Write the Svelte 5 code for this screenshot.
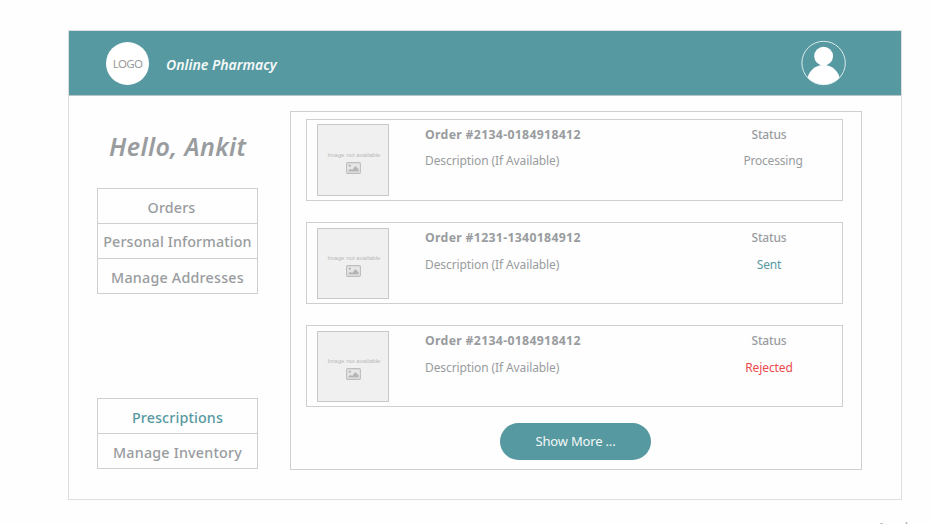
<script>
  const account = [{ label: 'Orders' }, { label: 'Personal Information' }, { label: 'Manage Addresses' }];
  const orders = [
    { id: '2134-0184918412', status: 'Processing', tone: 'pending' },
    { id: '1231-1340184912', status: 'Sent', tone: 'sent' },
    { id: '2134-0184918412', status: 'Rejected', tone: 'rejected' }
  ];
</script>

<div class="page">
  <div class="frame">
    <header>
      <div class="logo"><span>LOGO</span></div>
      <h1><span>Online Pharmacy</span></h1>
      <svg class="avatar" viewBox="0 0 46 46" width="46" height="46">
        <defs><clipPath id="ring"><circle cx="22.6" cy="23" r="22" /></clipPath></defs>
        <circle cx="22.6" cy="16.2" r="9.4" fill="#fff" />
        <ellipse cx="22.6" cy="40.8" rx="16.3" ry="15.8" fill="#fff" clip-path="url(#ring)" />
        <circle cx="22.6" cy="23" r="21.7" fill="none" stroke="#dcebec" stroke-width="1" />
      </svg>
    </header>
    <main>
      <aside>
        <h2><span>Hello, Ankit</span></h2>
        <nav class="account">
          {#each account as item, i}
            <a class="n{i}" href="#top"><span>{item.label}</span></a>
          {/each}
        </nav>
        <nav class="manage">
          <a class="active" href="#top"><span>Prescriptions</span></a>
          <a class="inventory" href="#top"><span>Manage Inventory</span></a>
        </nav>
      </aside>
      <section class="panel">
        {#each orders as order, i}
          <article class:lower={i > 0}>
            <div class="thumb">
              <span>Image not available</span>
              <svg viewBox="0 0 15 12" width="15" height="12">
                <rect x="0.6" y="0.6" width="13.8" height="10.8" rx="1.2" fill="#e6e6e6" stroke="#bdbdbd" stroke-width="1.1" />
                <circle cx="3.8" cy="3.6" r="1.2" fill="#b5b5b5" />
                <path d="M2.4 9.5V8.4l2-1.6 1.7 1.3 3.2-4.2 3.4 3.3v2.3z" fill="#b5b5b5" />
              </svg>
            </div>
            <div class="info">
              <h3><span>Order #{order.id}</span></h3>
              <p><span>Description (If Available)</span></p>
            </div>
            <div class="state">
              <h4><span>Status</span></h4>
              <p class={order.tone}><span>{order.status}</span></p>
            </div>
          </article>
        {/each}
        <button><span>Show More ...</span></button>
      </section>
    </main>
  </div>
  <svg class="marks" viewBox="0 0 30 3" width="30" height="3">
    <path d="M0 2.5h3" stroke="#c4c4c4" stroke-width="1" />
    <path d="M26.5 1v2" stroke="#b8b8b8" stroke-width="1.6" />
  </svg>
</div>

<style>
  :global(body) { background: #fff; }
  * { box-sizing: border-box; margin: 0; }
  span { white-space: nowrap; }
  .page {
    height: 524px; padding: 30px 0 0 68px; overflow: hidden; position: relative;
    font-family: 'Noto Sans', 'Open Sans', sans-serif; color: #999c9e; background: #fefefe;
  }
  .frame { width: 834px; height: 470px; border: 1px solid #dedede; background: #fefefe; }
  header {
    height: 65px; background: #5799a1; border-bottom: 1px solid #b9c4c7;
    display: flex; padding: 10px 0 0 37px;
  }
  .logo {
    width: 43px; height: 43px; margin-top: 1px; border-radius: 50%; background: #fff;
    display: flex; justify-content: center; font-size: 11.5px; line-height: 43px; letter-spacing: -0.7px;
  }
  h1 { margin-left: 17px; font-size: 14px; font-style: italic; font-weight: 600; line-height: 47px; color: #f5f9f9; letter-spacing: 0; }
  .avatar { margin: -1px 54px 0 auto; }
  main { display: flex; height: 403px; }
  aside { width: 189px; margin-left: 28px; padding-top: 33px; }
  h2 { height: 59px; padding-left: 12px; font-size: 25px; line-height: 35px; font-weight: 600; font-style: italic; letter-spacing: 0.4px; }
  nav { width: 161px; border: 1px solid #cfcfcf; }
  nav a {
    display: flex; justify-content: center; height: 35px; line-height: 35px;
    font-size: 14.3px; font-weight: 500; letter-spacing: 0.12px; color: inherit; text-decoration: none;
  }
  nav a + a { border-top: 1px solid #cfcfcf; }
  .account { height: 106px; }
  .n0 { height: 34px; line-height: 38px; padding-right: 12px; }
  .n1 { line-height: 35px; }
  .n2 { line-height: 37px; letter-spacing: 0.22px; }
  .manage { margin-top: 104px; height: 71px; }
  .manage .active { height: 34px; line-height: 37px; color: #5799a1; }
  .manage .inventory { line-height: 37px; letter-spacing: 0.2px; }
  .panel {
    width: 572px; height: 359px; margin: 15px 0 0 4px; border: 1px solid #cfcfcf;
    padding: 7px 0 0 15px;
  }
  article {
    display: flex; width: 537px; height: 82px; border: 1px solid #cfcfcf;
    margin-bottom: 21px; padding: 4px 0 0 10px;
  }
  article.lower { padding-top: 5px; }
  .thumb {
    width: 72px; height: 72px; border: 1px solid #c8c8c8; background: #f0f0f0;
    display: flex; flex-direction: column; align-items: center; padding-top: 25px;
    font: 6.1px/10px 'Liberation Sans', Arial, sans-serif; color: #b9b9b9;
  }
  .thumb span { padding-left: 2px; }
  .thumb svg { margin-top: 2px; }
  .lower .thumb { height: 71px; padding-top: 24px; }
  .info { margin-left: 36px; width: 300px; padding-top: 1px; }
  h3 { font-size: 12.3px; font-weight: 700; line-height: 20px; letter-spacing: 0.3px; }
  .info p, .state p { font-size: 12px; line-height: 20px; margin-top: 6px; letter-spacing: -0.1px; }
  .state { width: 88px; text-align: center; padding-top: 1px; }
  .lower .info, .lower .state { padding-top: 0; }
  h4 { font-size: 12px; font-weight: 500; line-height: 20px; letter-spacing: -0.15px; }
  .pending { padding-left: 8px; }
  .state .pending { letter-spacing: -0.2px; }
  .lower .state p { margin-top: 7px; }
  .lower .info p { margin-top: 7px; }
  .sent { color: #5799a1; }
  .rejected { color: #ec4b4e; }
  button {
    display: block; width: 151px; height: 37px; margin: -5px 0 0 194px; padding: 0; border: 0; border-radius: 19px;
    background: #5799a1; color: #f3f8f8; font: 13px/37px 'Noto Sans', sans-serif; letter-spacing: -0.18px;
  }
  .marks { position: absolute; left: 880px; top: 521px; }
</style>
